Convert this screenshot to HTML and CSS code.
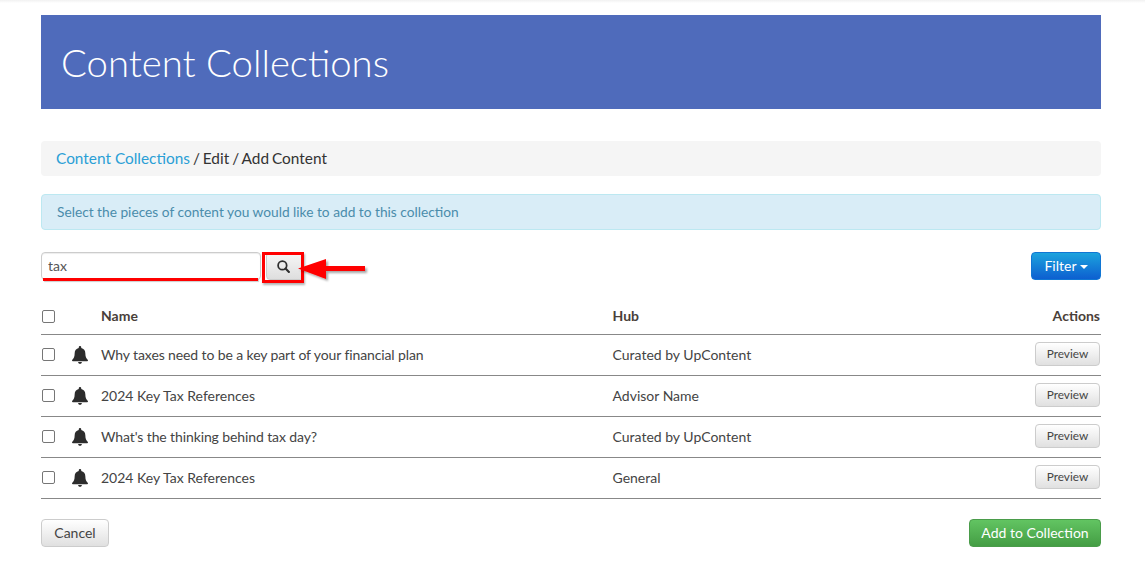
FILE: index.html
```html
<!DOCTYPE html>
<html lang="en">
<head>
<meta charset="utf-8">
<title>Content Collections</title>
<link rel="stylesheet" href="styles.css">
</head>
<body>
<div class="topshade"></div>
<main class="page">
  <header class="jumbo"><h1>Content Collections</h1></header>
  <nav class="crumb"><a href="#">Content Collections</a> <span class="sep">/</span> Edit <span class="sep">/</span> Add Content</nav>
  <div class="alert">Select the pieces of content you would like to add to this collection</div>
  <div class="toolbar">
    <div class="search">
      <input class="input" type="text" value="tax">
      <button class="btn searchbtn" aria-label="Search">
        <svg viewBox="0 0 14 14" width="13" height="13"><circle cx="5.8" cy="5.8" r="4.6" fill="none" stroke="#2f2f2f" stroke-width="1.9"/><path d="M9.200 9.200 12.800 12.800" stroke="#2f2f2f" stroke-width="2.300" stroke-linecap="round"/></svg>
      </button>
      <span class="mark-line"></span>
      <span class="mark-box"></span>
      <svg class="mark-arrow" viewBox="0 0 74 26" width="74" height="26"><defs><filter id="sh" x="-20%" y="-30%" width="140%" height="170%"><feDropShadow dx="2" dy="2" stdDeviation="1.2" flood-color="#000" flood-opacity=".35"/></filter></defs><path d="M1 9.500 29 0v7h39v5H29v8Z" fill="#f00" filter="url(#sh)"/></svg>
    </div>
    <button class="btn filter">Filter<i class="caret"></i></button>
  </div>
  <table class="tbl">
    <thead>
      <tr><th class="c-check"><input type="checkbox" class="cb"></th><th class="c-bell"></th><th class="c-name">Name</th><th class="c-hub">Hub</th><th class="c-act">Actions</th></tr>
    </thead>
    <tbody>
      <tr><td class="c-check"><input type="checkbox" class="cb"></td><td class="c-bell"><svg class="bell" viewBox="0 0 18 20" width="16" height="18"><path d="M9 0a1.400 1.400 0 0 0-1.400 1.400v.7C4.800 2.700 3 5 3 8c0 4-1 5.500-2.400 7-.4.500-.6.800-.6 1.100 0 .5.400.9 1 .9h16c.6 0 1-.4 1-.9 0-.3-.2-.6-.6-1.100C16 13.500 15 12 15 8c0-3-1.800-5.300-4.600-5.900v-.7A1.400 1.400 0 0 0 9 0ZM6.800 18a2.200 2 0 0 0 4.400 0Z"/></svg></td><td class="tight">Why taxes need to be a key part of your financial plan</td><td>Curated by UpContent</td><td class="c-act"><button class="btn preview">Preview</button></td></tr>
      <tr><td class="c-check"><input type="checkbox" class="cb"></td><td class="c-bell"><svg class="bell" viewBox="0 0 18 20" width="16" height="18"><path d="M9 0a1.400 1.400 0 0 0-1.400 1.400v.7C4.800 2.700 3 5 3 8c0 4-1 5.500-2.400 7-.4.500-.6.800-.6 1.100 0 .5.400.9 1 .9h16c.6 0 1-.4 1-.9 0-.3-.2-.6-.6-1.100C16 13.500 15 12 15 8c0-3-1.800-5.300-4.600-5.900v-.7A1.400 1.400 0 0 0 9 0ZM6.800 18a2.200 2 0 0 0 4.400 0Z"/></svg></td><td>2024 Key Tax References</td><td>Advisor Name</td><td class="c-act"><button class="btn preview">Preview</button></td></tr>
      <tr><td class="c-check"><input type="checkbox" class="cb"></td><td class="c-bell"><svg class="bell" viewBox="0 0 18 20" width="16" height="18"><path d="M9 0a1.400 1.400 0 0 0-1.400 1.400v.7C4.800 2.700 3 5 3 8c0 4-1 5.500-2.400 7-.4.500-.6.800-.6 1.100 0 .5.400.9 1 .9h16c.6 0 1-.4 1-.9 0-.3-.2-.6-.6-1.100C16 13.500 15 12 15 8c0-3-1.800-5.300-4.600-5.900v-.7A1.400 1.400 0 0 0 9 0ZM6.800 18a2.200 2 0 0 0 4.400 0Z"/></svg></td><td class="tight">What's the thinking behind tax day?</td><td>Curated by UpContent</td><td class="c-act"><button class="btn preview">Preview</button></td></tr>
      <tr><td class="c-check"><input type="checkbox" class="cb"></td><td class="c-bell"><svg class="bell" viewBox="0 0 18 20" width="16" height="18"><path d="M9 0a1.400 1.400 0 0 0-1.400 1.400v.7C4.800 2.700 3 5 3 8c0 4-1 5.500-2.400 7-.4.500-.6.800-.6 1.100 0 .5.400.9 1 .9h16c.6 0 1-.4 1-.9 0-.3-.2-.6-.6-1.100C16 13.500 15 12 15 8c0-3-1.800-5.300-4.600-5.900v-.7A1.400 1.400 0 0 0 9 0ZM6.800 18a2.200 2 0 0 0 4.400 0Z"/></svg></td><td>2024 Key Tax References</td><td>General</td><td class="c-act"><button class="btn preview">Preview</button></td></tr>
    </tbody>
  </table>
  <div class="footer">
    <button class="btn cancel">Cancel</button>
    <button class="btn add">Add to Collection</button>
  </div>
</main>
</body>
</html>
```
FILE: styles.css
```css
* { box-sizing: border-box; }
html, body { margin: 0; padding: 0; }
body {
  background: #fff;
  color: #333;
  font-family: Lato, "Liberation Sans", sans-serif;
  font-size: 14px;
  line-height: 20px;
  height: 580px;
  overflow: hidden;
  position: relative;
}
.topshade {
  position: absolute;
  left: 0; right: 0; top: 0;
  height: 3px;
  background: linear-gradient(#f1f1f1, #fff);
}
.page {
  width: 1060px;
  margin-left: 41px;
  padding-top: 15px;
}
.jumbo {
  height: 94px;
  background: #4f6bbb;
  padding-left: 20px;
  display: flex;
  align-items: center;
}
.jumbo h1 {
  margin: 0;
  color: #fff;
  font-weight: 300;
  font-size: 38.300px;
  line-height: 44px;
}
.crumb {
  margin-top: 32px;
  height: 35px;
  background: #f5f5f5;
  border-radius: 4px;
  padding: 7px 15px;
  font-size: 15.400px;
  line-height: 21px;
  word-spacing: -1px;
}
.crumb a { color: #2a9fd6; text-decoration: none; word-spacing: 0; }
.alert {
  margin-top: 18px;
  height: 36px;
  padding: 7px 15px;
  background: #d9edf7;
  border: 1px solid #bce8f1;
  border-radius: 4px;
  color: #4a8cab;
  font-size: 13.730px;
}
.toolbar {
  margin-top: 22px;
  display: flex;
  justify-content: space-between;
  align-items: flex-start;
}
.search {
  position: relative;
  display: flex;
  gap: 5px;
}
.input {
  width: 220px;
  height: 28px;
  border: 1px solid #ccc;
  border-radius: 4px;
  padding: 0 6px 2px;
  font: 14px Lato, sans-serif;
  color: #555;
  box-shadow: inset 0 1px 1px rgba(0,0,0,.075);
}
.btn {
  font-family: Lato, sans-serif;
  border-radius: 4px;
  border: 1px solid #ccc;
  cursor: pointer;
  padding: 0;
}
.searchbtn {
  width: 38px;
  height: 28px;
  padding-right: 4px;
  background: linear-gradient(#f7f7f7, #dedede);
  display: flex;
  align-items: center;
  justify-content: center;
}
.mark-line {
  position: absolute;
  left: 2px; top: 26px;
  width: 215px; height: 3px;
  background: #f00;
  box-shadow: 1px 1px 1px rgba(0,0,0,.2);
}
.mark-box {
  position: absolute;
  left: 221px; top: 0;
  width: 42px; height: 31px;
  border: 3px solid #f00;
  box-shadow: 1px 2px 2px rgba(0,0,0,.3);
}
.mark-arrow {
  position: absolute;
  left: 256px; top: 7px;
}
.filter {
  width: 70px;
  height: 28px;
  padding-bottom: 2px;
  background: linear-gradient(#1ca3dd, #0d5fd0);
  border-color: #1076d4;
  color: #fff;
  font-size: 14px;
}
.caret {
  display: inline-block;
  margin-left: 3px;
  vertical-align: 2px;
  border-top: 4px solid #fff;
  border-left: 4px solid transparent;
  border-right: 4px solid transparent;
}
.tbl {
  width: 100%;
  margin-top: 16px;
  border-collapse: collapse;
  table-layout: fixed;
}
.tbl th, .tbl td { padding: 0; vertical-align: middle; text-align: left; }
.tbl thead tr { height: 38px; border-bottom: 1px solid #888; }
.tbl tbody tr { height: 41px; border-bottom: 1px solid #888; }
.tbl th { font-weight: 700; font-size: 14px; color: #4a3f3a; padding-top: 2px; }
.tbl td { font-size: 14px; color: #444; }
.tbl td.tight { letter-spacing: -.11px; }
.c-check { width: 28px; }
.c-bell { width: 32px; }
.c-hub { width: 380.500px; }
.c-name { width: 511.500px; }
.tbl .c-act { text-align: right; }
.tbl th.c-act { padding-right: 1px; }
.cb {
  appearance: none;
  display: block;
  margin: 0 0 0 1px;
  width: 13px;
  height: 13px;
  border: 1px solid #767676;
  border-radius: 2px;
  background: #fff;
}
.tbl thead .cb { margin-top: 1px; }
.bell { display: block; margin-left: 3px; fill: #2c2c2c; }
.preview {
  width: 65px;
  height: 24px;
  margin: 0 1px 2px 0;
  padding-bottom: 1px;
  font-size: 11.800px;
  color: #444;
  background: linear-gradient(#fff, #e0e0e0);
  vertical-align: middle;
}
.footer {
  margin-top: 20px;
  display: flex;
  justify-content: space-between;
}
.cancel {
  width: 68px;
  height: 28px;
  font-size: 14px;
  color: #444;
  background: linear-gradient(#fff, #e0e0e0);
}
.add {
  width: 132px;
  height: 28px;
  font-size: 14px;
  color: #fff;
  background: linear-gradient(#62c462, #449d44);
  border-color: #4a9c4a;
}
```
